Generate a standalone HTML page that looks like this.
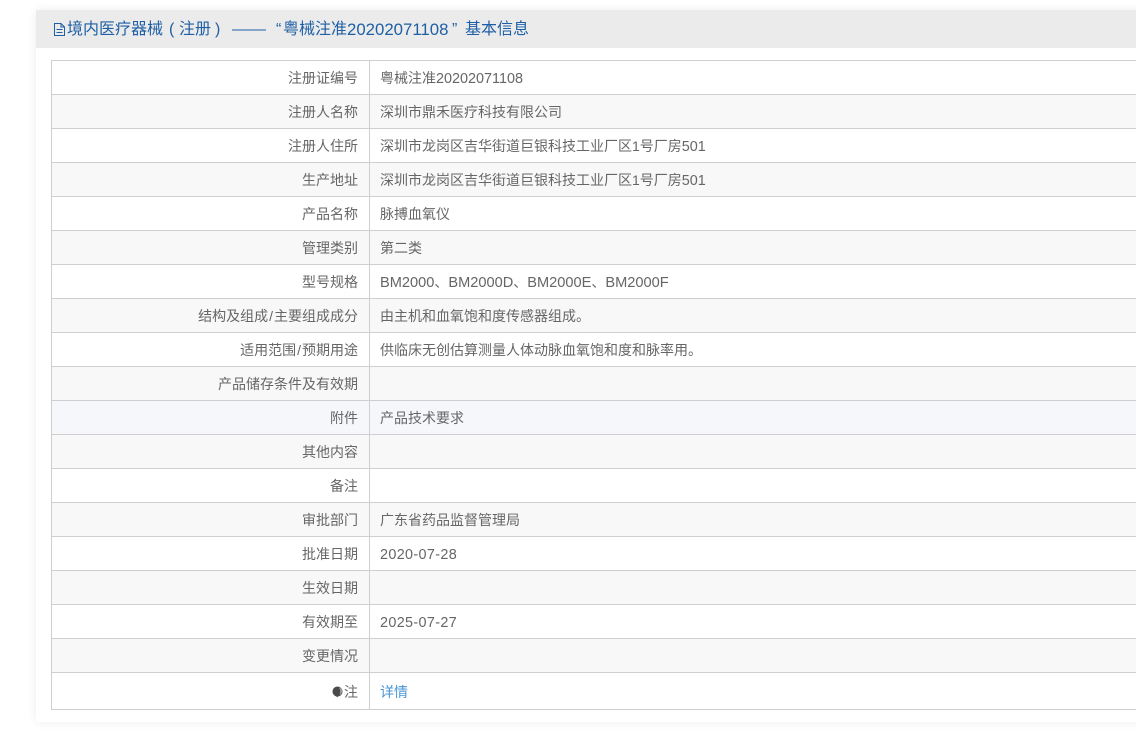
<!DOCTYPE html>
<html lang="zh">
<head>
<meta charset="utf-8">
<style>
html,body{margin:0;padding:0;width:1136px;height:730px;overflow:hidden;background:#fff;}
body{font-family:"Liberation Sans","Noto Sans CJK SC",sans-serif;color:#666;font-size:14px;position:relative;}
.panel{position:absolute;left:36px;top:10px;width:1120px;height:712px;background:#fff;border-radius:3px;box-shadow:0 0 10px rgba(0,0,0,.08);}
.head{position:absolute;left:36px;top:10px;width:1100px;height:38px;background:#ebebeb;color:#1f5fa5;font-size:16px;line-height:38px;white-space:nowrap;}
.head svg{position:absolute;left:16px;top:12px;}
.head span{position:absolute;top:1px;}
.t{position:absolute;left:51px;top:60px;width:1100px;height:650px;box-sizing:border-box;border-left:1px solid #cfcfcf;border-bottom:1px solid #cfcfcf;}
.r{display:flex;height:34px;box-sizing:border-box;border-top:1px solid #cfcfcf;overflow:hidden;white-space:nowrap;}
.r:nth-child(even){background:#f8f8f8;}
.r.h{background:#f5f7fb;}
.r.last{height:37px;}
.l{width:318px;box-sizing:border-box;border-right:1px solid #cfcfcf;text-align:right;padding:1px 11px 0 0;line-height:32px;}
.v{padding:1px 0 0 10px;line-height:32px;}
.last .l,.last .v{padding-top:1px;line-height:36px;}
a{color:#4a94d8;text-decoration:none;}
.n,.m,.d{line-height:1;}
.n{font-size:14.4px;}
.m{font-size:14.6px;}
.d{font-size:14.4px;letter-spacing:.35px;}
.s{padding:0 1px;}
.ball{display:inline-block;margin-right:1px;vertical-align:-1px;}
</style>
</head>
<body>
<div class="panel"></div>
<div class="head">
<svg width="14" height="15" viewBox="0 0 14 15" fill="none" stroke="#1f5fa5" stroke-width="1"><path d="M2.5 1.5H9L12.5 5V13.5H2.5Z M9 1.5V5H12.5 M4.5 7.5H10.5 M4.5 10.5H10.5"/></svg>
<span style="left:31px">境内医疗器械</span>
<span style="left:133px">(</span>
<span style="left:143px">注册</span>
<span style="left:179px">)</span>
<span style="left:196px;transform:scaleX(1.06);transform-origin:left">——</span>
<span style="left:240px">“</span>
<span style="left:247px">粤械注准</span>
<span style="left:311px;font-size:16.8px;line-height:37px">20202071108</span>
<span style="left:416px">”</span>
<span style="left:429px">基本信息</span>
</div>
<div class="t">
<div class="r"><div class="l">注册证编号</div><div class="v">粤械注准<span class="n">20202071108</span></div></div>
<div class="r"><div class="l">注册人名称</div><div class="v">深圳市鼎禾医疗科技有限公司</div></div>
<div class="r"><div class="l">注册人住所</div><div class="v">深圳市龙岗区吉华街道巨银科技工业厂区1号厂房<span class="n">501</span></div></div>
<div class="r"><div class="l">生产地址</div><div class="v">深圳市龙岗区吉华街道巨银科技工业厂区1号厂房<span class="n">501</span></div></div>
<div class="r"><div class="l">产品名称</div><div class="v">脉搏血氧仪</div></div>
<div class="r"><div class="l">管理类别</div><div class="v">第二类</div></div>
<div class="r"><div class="l">型号规格</div><div class="v"><span class="m">BM2000</span>、<span class="m">BM2000D</span>、<span class="m">BM2000E</span>、<span class="m">BM2000F</span></div></div>
<div class="r"><div class="l">结构及组成<span class="s">/</span>主要组成成分</div><div class="v">由主机和血氧饱和度传感器组成。</div></div>
<div class="r"><div class="l">适用范围<span class="s">/</span>预期用途</div><div class="v">供临床无创估算测量人体动脉血氧饱和度和脉率用。</div></div>
<div class="r"><div class="l">产品储存条件及有效期</div><div class="v"></div></div>
<div class="r h"><div class="l">附件</div><div class="v">产品技术要求</div></div>
<div class="r"><div class="l">其他内容</div><div class="v"></div></div>
<div class="r"><div class="l">备注</div><div class="v"></div></div>
<div class="r"><div class="l">审批部门</div><div class="v">广东省药品监督管理局</div></div>
<div class="r"><div class="l">批准日期</div><div class="v"><span class="d">2020-07-28</span></div></div>
<div class="r"><div class="l">生效日期</div><div class="v"></div></div>
<div class="r"><div class="l">有效期至</div><div class="v"><span class="d">2025-07-27</span></div></div>
<div class="r"><div class="l">变更情况</div><div class="v"></div></div>
<div class="r last"><div class="l"><svg class="ball" width="11" height="12" viewBox="0 0 11 12"><path d="M5.5 0.5A5 5 0 0 1 10.5 5.5A5 5 0 0 1 6 10.5L5 11.5L4.5 10.4A5 5 0 0 1 5.5 0.5Z" fill="#4a4a4a"/><path d="M7 1.5A4 4 0 0 1 10 5.5A4 4 0 0 1 7.5 9C8.5 6.5 8.5 4 7 1.5Z" fill="#a5a5a5"/></svg>注</div><div class="v"><a>详情</a></div></div>
</div>
</body>
</html>
